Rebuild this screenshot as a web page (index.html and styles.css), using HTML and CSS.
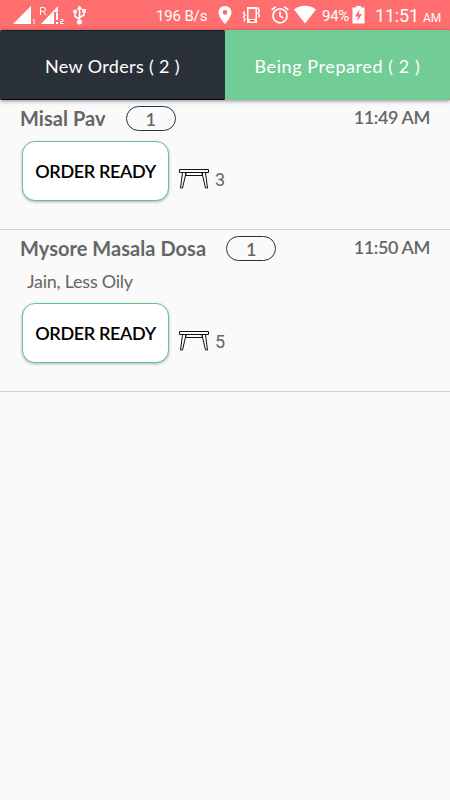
FILE: index.html
```html
<!DOCTYPE html>
<html lang="en">

<head>
  <meta charset="utf8">
  <meta name="viewport" content="width=device-width, initial-scale=1.0">
  <title>Orders</title>
  <link rel="stylesheet" href="styles.css">
</head>

<body>
  <!-- icon shared by all the orders -->
  <svg class="defs" width="0" height="0">
    <symbol id="table" viewBox="0 0 32 22">
      <g fill="none" stroke="#111" stroke-width="1">
        <path d="M1.5 1.5h29v3h-29z" />
        <path d="M8 7.5h16M8 5l-.5 2.500M24 5l.5 2.500" />
        <path d="M4.500 5L2.500 20h2L8 5M27.500 5l2 15h-2L24 5" />
      </g>
    </symbol>
  </svg>

  <div class="status-bar">
    <svg class="signal" width="88" height="30" viewBox="0 0 88 30" fill="#fff">
      <path d="M13 24L31 6v18z" />
      <path d="M33 19.800l1-.5V24" fill="none" stroke="#fff" />
      <path d="M41 24L58 6v6h-4v12z" />
      <path d="M40.500 15V7.500h3a2 2 0 0 1 0 4h-3M43.500 11.500l2.500 3.500" fill="none" stroke="#fff" />
      <path d="M56 12.500h2v7.500h-2zM56 22h2v2h-2z" />
      <path d="M60.500 19.500h2.500v2h-2.500v2h3" fill="none" stroke="#fff" />
      <g fill="none" stroke="#fff" stroke-width="1.600">
        <path d="M79.500 22V7M79.500 19l-4.500-2.500V12M79.500 17.500l4.500-2.500v-4" />
      </g>
      <path d="M76.500 9.500l3-4 3 4zM82 9h4v3.500h-4z" />
      <circle cx="75" cy="11.500" r="2" />
      <circle cx="79.500" cy="22" r="2.500" />
    </svg>
    <span class="speed">196 B/s</span>
    <svg class="tray" width="104" height="30" viewBox="214 0 104 30" fill="#fff">
      <path fill-rule="evenodd" d="M225 6c-3.700 0-6.500 2.900-6.500 6.500 0 4.800 6.500 11.500 6.500 11.500s6.500-6.700 6.500-11.500c0-3.600-2.800-6.500-6.500-6.500zm0 4a2.400 2.400 0 1 1 0 4.800 2.400 2.400 0 0 1 0-4.800z" />
      <path fill-rule="evenodd" d="M247 7h10v16h-10zM248.500 9v10h7V9z" />
      <path d="M250 20h4.500v1.500h-4.500z" fill="#f33" />
      <path d="M244.500 11.500l-1 1.500 1.500 2-1.500 2 1.500 2-1 2.500M259 7.500l-1 1.500 1.500 2-1.500 2 1.500 2-1 2.500" fill="none" stroke="#fff" stroke-width="1.400" />
      <g fill="none" stroke="#fff" stroke-width="1.700">
        <circle cx="280" cy="15.800" r="7" />
        <path d="M280 11.500V16l3.200 2M271.700 10l4-3.400M288.300 10l-4-3.400" />
      </g>
      <path d="M294 9.500C300.500 4.500 309.500 4.500 316 9.500L305 23.500z" />
    </svg>
    <span class="percent">94%</span>
    <svg class="battery" width="13" height="19" viewBox="0 0 13 19">
      <path d="M4 1h5v1.500h3.500V18.500H.5V2.500H4z" fill="#fff" />
      <path d="M7.500 4.500L3 11.500h3L5 16.500l5-7.500H7z" fill="#ff6e6e" />
    </svg>
    <span class="clock">11:51 <small>AM</small></span>
  </div>

  <div class="tabs">
    <div class="tab tab-new"><span>New Orders ( 2 )</span></div>
    <div class="tab tab-prepared"><span>Being Prepared ( 2 )</span></div>
  </div>

  <div class="orders">
    <div class="order">
      <div class="order-head">
        <span class="name">Misal Pav</span>
        <span class="count">1</span>
        <span class="time">11:49 AM</span>
      </div>
      <div class="order-actions">
        <button class="ready">ORDER READY</button>
        <svg class="table" width="32" height="22"><use href="#table" /></svg>
        <span class="table-number">3</span>
      </div>
    </div>

    <div class="order">
      <div class="order-head">
        <span class="name">Mysore Masala Dosa</span>
        <span class="count">1</span>
        <span class="time">11:50 AM</span>
      </div>
      <div class="note">Jain, Less Oily</div>
      <div class="order-actions">
        <button class="ready">ORDER READY</button>
        <svg class="table" width="32" height="22"><use href="#table" /></svg>
        <span class="table-number">5</span>
      </div>
    </div>
  </div>
</body>

</html>
```

FILE: styles.css
```css
html,
body {
  height: 100%;
  margin: 0;
}

body {
  background-color: #fafafa;
  color: #666;
  font-family: Lato, 'Open Sans', sans-serif;
  overflow: hidden;
}

.defs {
  display: block;
}

.status-bar {
  height: 30px;
  display: flex;
  background-color: #ff6e6e;
  color: #fff;
  font-family: Roboto, sans-serif;
  line-height: 32px;
  white-space: nowrap;
}

.status-bar svg {
  flex: none;
}

.speed {
  width: 58px;
  padding-left: 68px;
  font-size: 15px;
  letter-spacing: -0.15px;
}

.percent {
  width: 30px;
  padding-left: 4px;
  font-size: 15px;
  letter-spacing: -0.3px;
}

.battery {
  margin-top: 5px;
}

.clock {
  margin-left: 10px;
  font-size: 18px;
  letter-spacing: -0.2px;
}

.clock small {
  font-size: 12px;
}

.tabs {
  display: flex;
  height: 70px;
  background-color: #ff6e6e;
  box-shadow: 0 1px 4px rgba(0, 0, 0, 0.45);
}

.tab {
  flex: 1;
  display: flex;
  align-items: center;
  justify-content: center;
  padding-top: 2px;
  box-sizing: border-box;
  border-radius: 2px;
  color: #fff;
  font-size: 18px;
}

.tab-new {
  background-color: #293038;
  border-top: 1px solid #102332;
  border-bottom: 1px solid #050a0e;
  letter-spacing: 0.35px;
}

.tab-prepared {
  background-color: #72cc96;
  letter-spacing: 0.58px;
}

.order {
  padding: 6px 20px 28px;
  border-bottom: 1px solid #d2d2d2;
}

.order-head {
  display: flex;
  height: 25px;
  line-height: 24px;
  font-size: 20px;
  font-weight: bold;
}

.name {
  letter-spacing: 0.05px;
}

.count {
  width: 50px;
  height: 25px;
  margin-left: 20px;
  box-sizing: border-box;
  border: 1px solid #26343a;
  border-radius: 13px;
  text-align: center;
  font-size: 18px;
  font-weight: 600;
}

.time {
  margin-left: auto;
  line-height: 22px;
  font-size: 18px;
  font-weight: 600;
  letter-spacing: -0.4px;
}

.note {
  height: 32px;
  padding-left: 7px;
  line-height: 40px;
  font-size: 18px;
  letter-spacing: -0.25px;
}

.order-actions {
  display: flex;
  align-items: flex-start;
  padding: 10px 0 0 2px;
}

.ready {
  width: 147px;
  height: 60px;
  padding: 0;
  border: 1.5px solid #5cc98b;
  border-radius: 13px;
  background-color: #fff;
  box-shadow: 0 1px 3px rgba(0, 0, 0, 0.3);
  color: #000;
  font-family: inherit;
  font-size: 18px;
  font-weight: 600;
  letter-spacing: -0.35px;
}

.table {
  margin: 27px 0 0 9px;
}

.table-number {
  margin: 29px 0 0 5px;
  line-height: 20px;
  font-family: Roboto, sans-serif;
  font-size: 18px;
}
```
